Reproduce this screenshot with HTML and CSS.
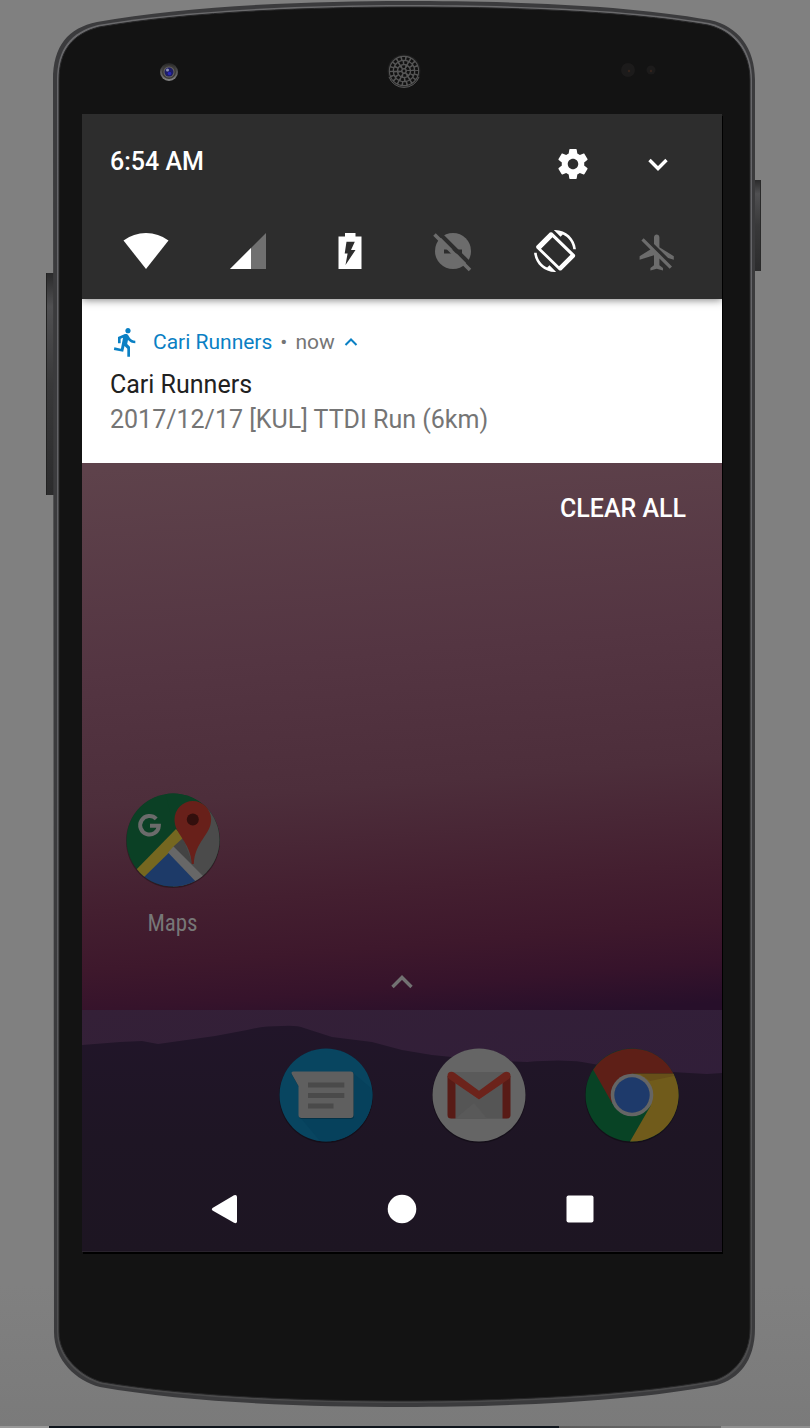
FILE: index.html
```
<!DOCTYPE html>
<html lang="en">
<head>
<meta charset="utf-8">
<meta name="viewport" content="width=device-width, initial-scale=1">
<title>Cari Runners notification</title>
<link rel="stylesheet" href="styles.css">
</head>
<body>
<main class="stage">
  <svg class="shell" viewBox="0 0 810 1428" preserveAspectRatio="none" aria-hidden="true">
    <defs>
      <linearGradient id="key" x1="0" y1="0" x2="0" y2="1">
        <stop offset="0" stop-color="#2a2a2b"/><stop offset=".15" stop-color="#505052"/><stop offset=".5" stop-color="#39393a"/><stop offset="1" stop-color="#2c2c2d"/>
      </linearGradient>
      <linearGradient id="rim" x1="0" y1="0" x2="0" y2="1">
        <stop offset="0" stop-color="#6a6a6c"/><stop offset=".1" stop-color="#66666a"/><stop offset=".7" stop-color="#5c5c5f"/><stop offset="1" stop-color="#4a4a4b"/>
      </linearGradient>
    </defs>
    <rect x="46" y="273" width="9" height="222" rx="1" fill="url(#key)"/>
    <path d="M46.500 273V495" stroke="#222" fill="none"/>
    <rect x="753" y="180" width="8" height="91" rx="1" fill="url(#key)"/>
    <path d="M760.500 180V271" stroke="#2a2a2a" fill="none"/>
    <path d="M53 80C53 46 68 28 97 22C190 5 320 1 404 1C500 1 620 4 710 20C738 26 755 48 755 80V1328C755 1362 738 1379 717 1385C630 1402 500 1407 404 1407C310 1407 190 1403 100 1387C76 1381 54 1360 54 1332Z" fill="#3b3b3d"/>
    <path d="M57 80C57 49 71 32 98 25C190 9 320 5 404 5C500 5 620 8 709 23C735 29 752 50 752 80V1328C752 1359 735 1376 716 1382C630 1398 500 1403 404 1403C310 1403 190 1399 101 1384C79 1378 57 1358 57 1332Z" fill="url(#rim)"/>
    <path d="M59 80C59 51 72 34 99 27C190 11 320 7 404 7C500 7 620 10 708 25C733 31 750 51 750 80V1328C750 1357 733 1374 715 1380C630 1396 500 1401 404 1401C310 1401 190 1397 102 1382C80 1376 59 1356 59 1332Z" fill="#131313" stroke="#262627"/>
  </svg>

  <div class="bezel" aria-hidden="true">
    <svg width="36" height="36" viewBox="0 0 36 36">
      <defs>
        <linearGradient id="lens" x1="0" y1="0" x2="0" y2="1"><stop offset="0" stop-color="#252525"/><stop offset="1" stop-color="#858585"/></linearGradient>
      </defs>
      <circle cx="18" cy="18" r="9" fill="url(#lens)"/>
      <circle cx="18" cy="18" r="7" fill="#3c3a38"/>
      <circle cx="18" cy="18" r="5.500" fill="#66645f"/>
      <circle cx="18" cy="18" r="4.500" fill="#1d1d66"/>
      <circle cx="16.500" cy="16" r="1.500" fill="#8d93b8"/>
      <circle cx="18.500" cy="19.500" r="1.800" fill="#2727b5"/>
    </svg>
    <svg width="36" height="36" viewBox="0 0 36 36">
      <circle cx="18" cy="17" r="16.500" fill="#1f1f1f"/>
      <path d="M3 23A16 16 0 0 0 33 23" fill="none" stroke="#5a5a5a"/>
      <circle cx="18" cy="17" r="15.200" fill="#565656"/>
      <g fill="none" stroke="#111" stroke-width="2.800">
        <circle cx="18" cy="17" r="4.400" stroke-dasharray="2.900 1.708"/>
        <circle cx="18" cy="17" r="8.600" stroke-dasharray="2.900 1.603"/>
        <circle cx="18" cy="17" r="12.700" stroke-dasharray="2.900 1.533"/>
      </g>
      <circle cx="18" cy="17" r="1.400" fill="#111"/>
    </svg>
    <svg width="36" height="36" viewBox="0 0 36 36">
      <circle cx="7" cy="16" r="7" fill="#1c1b1b"/><circle cx="8" cy="17" r="1.200" fill="#35241d"/>
      <circle cx="30" cy="16" r="4.500" fill="#1c1b1b"/><circle cx="30" cy="17" r="1.200" fill="#35241d"/>
    </svg>
  </div>

  <div class="screen">
    <header class="shade">
      <div class="shade-top">
        <time class="clock" datetime="06:54">6:54 AM</time>
        <div class="shade-actions">
          <button class="icon-button" type="button" aria-label="Settings">
            <svg width="36" height="36" viewBox="0 0 24 24" fill="#fff"><path d="M19.430 12.980c.04-.32.07-.64.07-.98s-.03-.66-.07-.98l2.110-1.650c.19-.15.24-.42.12-.64l-2-3.460c-.12-.22-.39-.3-.61-.22l-2.490 1c-.52-.4-1.080-.73-1.690-.98l-.38-2.650C14.460 2.180 14.250 2 14 2h-4c-.25 0-.46.18-.49.42l-.38 2.650c-.61.25-1.170.59-1.690.98l-2.490-1c-.23-.09-.49 0-.61.22l-2 3.460c-.13.22-.07.49.12.64l2.110 1.650c-.04.32-.07.65-.07.98s.03.66.07.98l-2.110 1.650c-.19.15-.24.42-.12.64l2 3.460c.12.22.39.3.61.22l2.490-1c.52.4 1.080.73 1.690.98l.38 2.650c.03.24.24.42.49.42h4c.25 0 .46-.18.49-.42l.38-2.650c.61-.25 1.170-.59 1.690-.98l2.490 1c.23.09.49 0 .61-.22l2-3.460c.12-.22.07-.49-.12-.64l-2.110-1.650zM12 15.500c-1.930 0-3.500-1.570-3.500-3.500s1.570-3.500 3.500-3.500 3.500 1.570 3.500 3.500-1.570 3.500-3.500 3.500z"/></svg>
          </button>
          <button class="icon-button" type="button" aria-label="Expand quick settings">
            <svg width="36" height="36" viewBox="0 0 36 36" fill="none" stroke="#fff" stroke-width="3.400"><path d="M9.500 14L18 22.500L26.500 14"/></svg>
          </button>
        </div>
      </div>
      <div class="tiles">
        <button class="icon-button" type="button" aria-label="Wi-Fi"><svg width="48" height="48" viewBox="0 0 48 48"><path d="M1.500 13.500A37.500 37.500 0 0 1 46.500 13.500L24 42Z" fill="#fff"/></svg></button>
        <button class="icon-button" type="button" aria-label="Mobile signal"><svg width="48" height="48" viewBox="0 0 48 48"><path d="M6 42L42 6V42Z" fill="#707070"/><path d="M6 42L27 21V42Z" fill="#fff"/></svg></button>
        <button class="icon-button" type="button" aria-label="Battery charging"><svg width="48" height="48" viewBox="0 0 48 48"><path fill="#fff" fill-rule="evenodd" d="M11.500 9.500H18V6H28.500V9.500H34.500V42H11.500ZM19.500 14.700H27.800L24 23H28.500L18.500 38L20.600 26.500H17.700Z"/></svg></button>
        <button class="icon-button" type="button" aria-label="Do not disturb off"><svg width="48" height="48" viewBox="0 0 48 48"><circle cx="24" cy="24" r="18" fill="#6c6c6c"/><path d="M15 22.500H33V26.500H15Z" fill="#2d2d2d"/><path d="M8 4L44 40" stroke="#2d2d2d" stroke-width="4"/><path d="M5.500 7.500L41 43" stroke="#6c6c6c" stroke-width="3.600"/></svg></button>
        <button class="icon-button" type="button" aria-label="Auto rotate"><svg width="48" height="48" viewBox="0 0 48 48" fill="#fff"><path fill-rule="evenodd" d="M5.500 18.800L18.800 5.500Q20 4.800 21.200 5.500L43.800 27.500Q44.600 28.700 43.800 29.900L30.500 43.200Q29.300 44 28.100 43.200L5.500 21.200Q4.700 20 5.500 18.800ZM10 21.700L28 39.200L39.500 27.700L21.500 10.200Z"/><path transform="translate(3 3) scale(1.750)" d="M16.480 2.520c3.270 1.550 5.610 4.720 5.970 8.480h1.500C23.440 4.840 18.290 0 12 0l-.66.030 3.810 3.810 1.330-1.320zM7.520 21.480C4.250 19.940 1.910 16.760 1.550 13H.05C.56 19.160 5.710 24 12 24l.66-.03-3.810-3.810-1.330 1.320z"/></svg></button>
        <button class="icon-button" type="button" aria-label="Airplane mode off"><svg width="48" height="48" viewBox="0 0 48 48" fill="#6c6c6c"><path transform="translate(2 4) scale(1.800)" d="M13 9V3.500c0-.83-.67-1.500-1.500-1.500S10 2.670 10 3.500v3.680l7.830 7.830L21 16v-2l-8-5zM3 5.270l4.990 4.990L2 14v2l8-2.500V19l-2 1.500V22l3.500-1 3.500 1v-1.500L13 19v-3.730L18.730 21 20 19.730 4.270 4 3 5.270z"/></svg></button>
      </div>
    </header>

    <article class="notification">
      <div class="note-head">
        <svg width="32" height="32" viewBox="0 0 24 24" fill="#0a80c4" aria-hidden="true"><path d="M13.490 5.480c1.100 0 2-.9 2-2s-.9-2-2-2-2 .9-2 2 .9 2 2 2zm-3.600 13.900l1-4.400 2.100 2v6h2v-7.500l-2.100-2 .6-3c1.300 1.500 3.300 2.500 5.500 2.500v-2c-1.900 0-3.500-1-4.300-2.400l-1-1.600c-.4-.6-1-1-1.700-1-.3 0-.5.1-.8.1l-5.200 2.200v4.700h2v-3.400l1.800-.7-1.600 8.100-4.900-1-.4 2 7 1.400z"/></svg>
        <span class="app-name">Cari Runners</span>
        <span class="dot">•</span>
        <span class="when">now</span>
        <button class="icon-button" type="button" aria-label="Collapse notification"><svg width="16" height="16" viewBox="0 0 16 16" fill="none" stroke="#0a80c4" stroke-width="2"><path d="M2.500 11L8 5.500L13.500 11"/></svg></button>
      </div>
      <h1 class="note-title">Cari Runners</h1>
      <p class="note-text">2017/12/17 [KUL] TTDI Run (6km)</p>
    </article>

    <section class="desktop">
      <svg class="wallpaper" viewBox="0 0 640 789" preserveAspectRatio="none" aria-hidden="true">
        <defs>
          <linearGradient id="sky" gradientUnits="userSpaceOnUse" x1="300" y1="-15" x2="345" y2="562">
            <stop offset="0" stop-color="#5e424b"/><stop offset=".35" stop-color="#543542"/><stop offset=".58" stop-color="#4d2e3b"/><stop offset=".76" stop-color="#441f30"/><stop offset=".86" stop-color="#3e182c"/><stop offset=".93" stop-color="#36132b"/><stop offset="1" stop-color="#270f2a"/>
          </linearGradient>
          <linearGradient id="haze" x1="0" y1="0" x2=".6" y2="1"><stop offset="0" stop-color="#342037"/><stop offset="1" stop-color="#2f1d3a"/></linearGradient>
          <linearGradient id="hill" x1="0" y1="0" x2="0" y2="1"><stop offset="0" stop-color="#211529"/><stop offset=".5" stop-color="#1e1524"/><stop offset="1" stop-color="#1d1522"/></linearGradient>
        </defs>
        <rect width="640" height="548" fill="url(#sky)"/>
        <rect y="547" width="640" height="242" fill="url(#haze)"/>
        <path d="M0 582L38 579L60 578L76 581L133 573L165 567Q180 563 200 563Q215 562 222 565L250 574L290 579L320 587L350 592L400 597L445 599Q480 596 500 599L540 606L590 609L625 611L640 610V789H0Z" fill="url(#hill)"/>
        <path d="M0 788.500H640" stroke="#29232d"/>
      </svg>

      <div class="home">
        <button class="clear-all" type="button">CLEAR ALL</button>
        <div class="app-row">
          <button class="app" type="button">
            <svg width="96" height="96" viewBox="0 0 96 96" aria-hidden="true">
              <defs><clipPath id="disc"><circle cx="48" cy="48" r="46.500"/></clipPath></defs>
              <circle cx="48" cy="49" r="47" fill="#000" opacity=".3"/>
              <g clip-path="url(#disc)">
                <rect width="96" height="96" fill="#0b4025"/>
                <path d="M48 46L96 0V96H48Z" fill="#4b4b4b"/>
                <path d="M50 40L40 0H82V30L56 46Z" fill="#0b4025"/>
                <path d="M44 58L80 96H4Z" fill="#1d3a68"/>
                <path d="M8 81L51 37L59 46L16 88Z" fill="#756720"/>
                <path d="M48.500 54.500L58 46L68 73Z" fill="#434343"/>
                <path d="M43 60.500L48.500 54.500L82 88L74 93Z" fill="#676767"/>
              </g>
              <path d="M67.800 9A18.300 18.300 0 0 1 86.100 27.500C86.100 43 70 49 68.800 72H66.800C65.500 49 49.500 43 49.500 27.500A18.300 18.300 0 0 1 67.800 9Z" fill="#68201a"/>
              <circle cx="67.800" cy="27.500" r="6" fill="#320f0d"/>
              <path d="M31.200 26.800A9.300 9.300 0 1 0 33.800 33.800H25" fill="none" stroke="#6b6b6b" stroke-width="4"/>
            </svg>
            <span class="app-label">Maps</span>
          </button>
        </div>
        <button class="icon-button drawer" type="button" aria-label="All apps"><svg width="24" height="24" viewBox="0 0 24 24" fill="none" stroke="#727272" stroke-width="3.400"><path d="M2.500 17L12 7.500L21.500 17"/></svg></button>
      </div>

      <div class="dock">
        <span></span>
        <button class="app" type="button" aria-label="Messages">
          <svg width="96" height="96" viewBox="0 0 96 96">
            <circle cx="48" cy="49" r="47" fill="#000" opacity=".3"/>
            <circle cx="48" cy="48" r="46.500" fill="#084560"/>
            <path d="M75 26L94 42A46.500 46.500 0 0 1 42 94L22 70Z" fill="#06415c"/>
            <path d="M15.500 25H73Q76 25 76 28V69Q76 72 73 72H24Q21 72 21 69V40L14 28Q13 25 15.500 25Z" fill="#043247"/>
            <path d="M15.500 24.500H72.500Q75.500 24.500 75.500 27.500V68Q75.500 71 72.500 71H23.500Q20.500 71 20.500 68V39L14 27.500Q12.500 24.500 15.500 24.500Z" fill="#5f5f5f"/>
            <path d="M30 35.500H66.300V40.500H30ZM30 46H66.300V51H30ZM30 56.500H55.500V61.500H30Z" fill="#4a4a4a"/>
          </svg>
        </button>
        <button class="app" type="button" aria-label="Gmail">
          <svg width="96" height="96" viewBox="0 0 96 96">
            <circle cx="48" cy="49" r="47" fill="#000" opacity=".3"/>
            <circle cx="48" cy="48" r="46.500" fill="#656565"/>
            <path d="M20 25H76V71.500H20Z" fill="#5a5a5a"/>
            <path d="M24.500 36L48 53L71.500 36V71.500H24.500Z" fill="#555"/>
            <path d="M24.500 71.500L43 56L56 71.500Z" fill="#595959"/>
            <path d="M16.500 29H24.500V71.500H20Q16.500 71.500 16.500 68ZM71.500 29H79.500V68Q79.500 71.500 76 71.500H71.500Z" fill="#581b16"/>
            <path d="M16.500 29Q16.500 24.800 20.500 24.800Q22 24.800 23.500 25.800L48 43.800L72.500 25.800Q74 24.800 75.500 24.800Q79.500 24.800 79.500 29Q79.500 31 77.500 32.300L48 52.500L18.500 32.300Q16.500 31 16.500 29Z" fill="#6c231b"/>
          </svg>
        </button>
        <button class="app" type="button" aria-label="Chrome">
          <svg width="96" height="96" viewBox="0 0 96 96">
            <circle cx="48" cy="49" r="47" fill="#000" opacity=".3"/>
            <circle cx="48" cy="48" r="46.500" fill="#084325"/>
            <path d="M9.200 22.800A46.500 46.500 0 0 1 89.500 26.800H48L28 56Z" fill="#5e1f17"/>
            <path d="M48 26.800H89.500A46.500 46.500 0 0 1 46 94.500L66.500 59Z" fill="#705b1b"/>
            <path d="M56 27H89.500L90 29L66 34Z" fill="#674f19"/>
            <circle cx="48" cy="48" r="21.300" fill="#656565"/>
            <circle cx="48" cy="48" r="17.700" fill="#1e3a6b"/>
          </svg>
        </button>
      </div>

      <nav class="navbar">
        <button class="icon-button" type="button" aria-label="Back"><svg width="32" height="32" viewBox="0 0 32 32" fill="#fff"><path d="M4.500 15L26 2.300Q28.700 1 29 4V28.500Q28.700 31 26 29.700L4.500 17.500Q3 16.300 4.500 15Z"/></svg></button>
        <button class="icon-button" type="button" aria-label="Home"><svg width="32" height="32" viewBox="0 0 32 32" fill="#fff"><circle cx="16" cy="16" r="14.300"/></svg></button>
        <button class="icon-button" type="button" aria-label="Recent apps"><svg width="32" height="32" viewBox="0 0 32 32" fill="#fff"><rect x="2.500" y="2.500" width="27" height="27" rx="2"/></svg></button>
      </nav>
    </section>
  </div>
  <div class="chin"></div>
  <div class="window-edge"></div>
</main>
</body>
</html>
```
FILE: styles.css
```
* {
  box-sizing: border-box;
}

body {
  margin: 0;
  background: #808080;
  font-family: Roboto, "Liberation Sans", sans-serif;
}

button {
  margin: 0;
  padding: 0;
  border: 0;
  background: none;
  color: inherit;
  font: inherit;
}

svg {
  display: block;
}

.stage {
  position: relative;
  isolation: isolate;
  display: flex;
  flex-direction: column;
  min-height: 100vh;
  background: linear-gradient(#808080 90%, #7a7a7a);
}

.shell {
  position: absolute;
  inset: 0;
  z-index: -1;
  width: 100%;
  height: 100%;
}

.bezel {
  display: grid;
  grid-template-columns: repeat(3, 1fr);
  justify-items: center;
  padding: 54px 53px 24px 51px;
}

.screen {
  display: flex;
  flex: 1;
  flex-direction: column;
  margin: 0 88px 0 82px;
  box-shadow: 1px 2px 0 #000;
}

.icon-button {
  display: flex;
  align-items: center;
  justify-content: center;
}

.shade {
  position: relative;
  z-index: 1;
  padding-bottom: 24px;
  background: #2d2d2d;
  box-shadow: 0 1px 8px rgba(0, 0, 0, 0.5);
  clip-path: inset(0 0 -12px 0);
}

.shade-top {
  display: flex;
  align-items: flex-start;
  justify-content: space-between;
  padding: 30px 46px 45px 28px;
}

.clock {
  color: #fff;
  font-size: 25px;
  font-weight: 500;
  line-height: 36px;
}

.shade-actions {
  display: flex;
  gap: 49px;
  padding-top: 2px;
}

.tiles {
  display: grid;
  grid-template-columns: repeat(6, 1fr);
  justify-items: center;
  padding: 0 13px;
}

.notification {
  padding: 26px 28px;
  background: #fff;
}

.note-head {
  display: flex;
  align-items: center;
  gap: 8px;
  margin-bottom: 8px;
  color: #757575;
  font-size: 21px;
  line-height: 34px;
}

.app-name {
  margin-left: 3px;
  color: #0a80c4;
}

.note-title,
.note-text {
  margin: 0;
  font-size: 25px;
  font-weight: 400;
  line-height: 35px;
}

.note-title {
  color: #212121;
}

.note-text {
  color: #757575;
}

.desktop {
  position: relative;
  isolation: isolate;
  display: flex;
  flex: 1;
  flex-direction: column;
}

.wallpaper {
  position: absolute;
  inset: 0;
  z-index: -1;
  width: 100%;
  height: 100%;
}

.home {
  display: flex;
  flex: 1;
  flex-direction: column;
  padding-bottom: 16px;
}

.clear-all {
  align-self: flex-end;
  margin: 28px 36px 24px;
  color: #fff;
  font-size: 25px;
  font-weight: 500;
  line-height: 36px;
}

.app-row,
.dock {
  display: grid;
  grid-template-columns: repeat(4, 1fr);
  padding: 0 14px;
}

.app-row {
  margin-top: auto;
}

.app {
  display: flex;
  flex-direction: column;
  align-items: center;
  gap: 22px;
}

.app-label {
  color: #777;
  font-family: "Roboto Condensed", Roboto, sans-serif;
  font-size: 23px;
  line-height: 28px;
}

.drawer {
  align-self: center;
  margin-top: 32px;
}

.dock {
  padding-top: 37px;
  padding-bottom: 25px;
}

.navbar {
  display: grid;
  grid-template-columns: repeat(3, 1fr);
  justify-items: center;
  padding: 25px 53px 27px;
}

.chin {
  height: 174px;
}

.window-edge {
  height: 2px;
  background: linear-gradient(90deg, #999 6%, #10161d 6%, #10161d 69%, #5c5c5c 69%, #6c6c6c 89%, #909090 89%);
}
```
